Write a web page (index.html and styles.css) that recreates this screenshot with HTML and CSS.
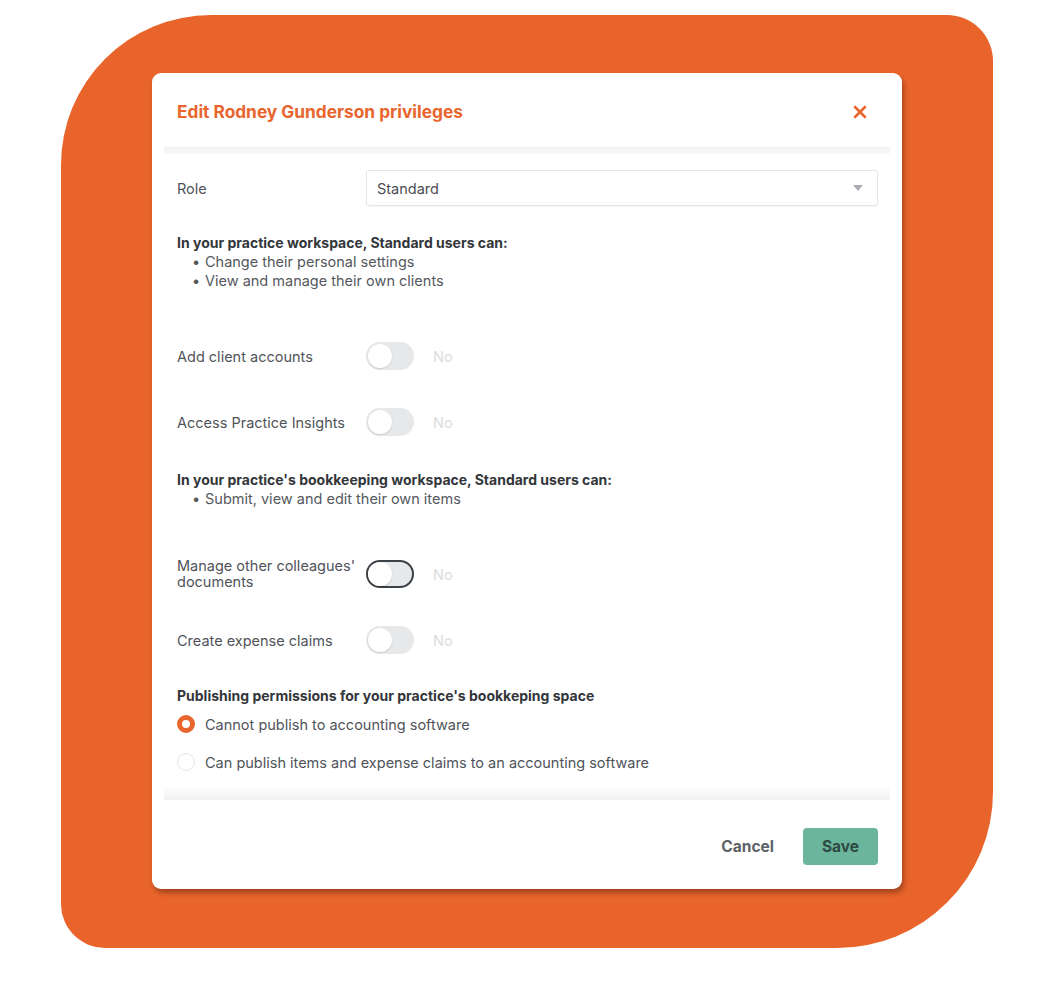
FILE: index.html
```html
<!DOCTYPE html>
<html lang="en">
<head>
    <meta charset="UTF-8">
    <meta name="viewport" content="width=device-width, initial-scale=1.0">
    <title>Edit privileges</title>
    <link rel="stylesheet" href="styles.css">
</head>
<body>
    <div class="stage">
        <div class="blob">
            <div class="modal">
                <header class="modal-head">
                    <h1>Edit Rodney Gunderson privileges</h1>
                    <svg class="close" width="14" height="14" viewBox="0 0 14 14">
                        <path d="M2 2 L12 12 M12 2 L2 12" stroke="#e8652d" stroke-width="2.6" stroke-linecap="round"/>
                    </svg>
                </header>
                <div class="band band-top"></div>

                <div class="modal-body">
                    <div class="row role-row">
                        <span class="label">Role</span>
                        <div class="select">
                            <span>Standard</span>
                            <svg width="10" height="6" viewBox="0 0 10 6"><path d="M0 0 H10 L5 6 Z" fill="#a9adb3"/></svg>
                        </div>
                    </div>

                    <div class="info first">
                        <p class="info-title">In your practice workspace, Standard users can:</p>
                        <ul>
                            <li>Change their personal settings</li>
                            <li>View and manage their own clients</li>
                        </ul>
                    </div>

                    <div class="row toggle-row gap-l">
                        <span class="label">Add client accounts</span>
                        <span class="toggle"><span class="knob"></span></span>
                        <span class="state">No</span>
                    </div>
                    <div class="row toggle-row gap-m">
                        <span class="label">Access Practice Insights</span>
                        <span class="toggle"><span class="knob"></span></span>
                        <span class="state">No</span>
                    </div>

                    <div class="info">
                        <p class="info-title">In your practice's bookkeeping workspace, Standard users can:</p>
                        <ul>
                            <li>Submit, view and edit their own items</li>
                        </ul>
                    </div>

                    <div class="row toggle-row gap-l">
                        <span class="label two-line">Manage other colleagues' documents</span>
                        <span class="toggle focused"><span class="knob"></span></span>
                        <span class="state">No</span>
                    </div>
                    <div class="row toggle-row gap-m">
                        <span class="label">Create expense claims</span>
                        <span class="toggle"><span class="knob"></span></span>
                        <span class="state">No</span>
                    </div>

                    <div class="publish">
                        <p class="info-title">Publishing permissions for your practice's bookkeping space</p>
                        <label class="radio"><span class="dot checked"></span>Cannot publish to accounting software</label>
                        <label class="radio"><span class="dot"></span>Can publish items and expense claims to an accounting software</label>
                    </div>
                </div>

                <div class="band band-bottom"></div>
                <footer class="modal-foot">
                    <button class="btn-cancel">Cancel</button>
                    <button class="btn-save">Save</button>
                </footer>
            </div>
        </div>
    </div>
</body>
</html>
```

FILE: styles.css
```css
* {
    margin: 0;
    padding: 0;
    box-sizing: border-box;
}

body {
    background: #fff;
    font-family: Inter, 'Liberation Sans', sans-serif;
    color: #4a4d52;
}

.stage {
    width: 1048px;
    height: 988px;
    padding: 15px 0 0 61px;
}

.blob {
    width: 932px;
    height: 933px;
    background: #e9642b;
    border-radius: 150px 46px 156px 44px;
    padding: 58px 0 0 91px;
}

.modal {
    width: 750px;
    height: 816px;
    background: #fff;
    border-radius: 9px;
    box-shadow: 2px 4px 5px rgba(80, 30, 10, 0.45);
    display: flex;
    flex-direction: column;
    overflow: hidden;
}

.modal-head {
    height: 74px;
    padding: 0 35px 0 25px;
    display: flex;
    align-items: center;
    justify-content: space-between;
}

.modal-head h1 {
    font-size: 17.3px;
    font-weight: 700;
    color: #e8652d;
    padding-top: 3px;
}

.close {
    margin-top: 4px;
}

.band {
    height: 7px;
    margin: 0 12px;
}

.band-top {
    background: linear-gradient(#f2f3f4, #f8f8f9);
}

.band-bottom {
    height: 14px;
    background: linear-gradient(rgba(242, 243, 245, 0), #eff0f2);
}

.modal-body {
    flex: 1;
    padding: 16px 24px 0 25px;
    font-size: 14.5px;
}

.row {
    display: flex;
    align-items: center;
}

.label {
    width: 189px;
    flex-shrink: 0;
    color: #50545a;
    font-size: 14.5px;
}

.label.two-line {
    line-height: 16px;
    padding-right: 6px;
}

.select {
    flex: 1;
    height: 36px;
    border: 1px solid #e3e5e9;
    border-radius: 3px;
    display: flex;
    align-items: center;
    justify-content: space-between;
    padding: 0 14px 0 10px;
    color: #4a4d52;
    box-shadow: 0 1px 1px rgba(0, 0, 0, 0.05);
}

.info {
    margin-top: 34px;
    line-height: 19px;
}

.info.first {
    margin-top: 27px;
}

.info-title {
    font-weight: 700;
    font-size: 14px;
    color: #33363a;
}

.info ul {
    list-style: none;
    padding-left: 15px;
    color: #55595e;
}

.info li::before {
    content: "\2022";
    display: inline-block;
    width: 13px;
}

.toggle-row {
    height: 28px;
}

.gap-l {
    margin-top: 52px;
}

.gap-m {
    margin-top: 38px;
}

.toggle {
    width: 48px;
    height: 28px;
    border-radius: 14px;
    background: #e7e8ea;
    padding: 2px;
    display: flex;
    align-items: center;
}

.toggle.focused {
    border: 2px solid #3c4146;
    padding: 0 2px 0 0;
}

.knob {
    width: 24px;
    height: 24px;
    border-radius: 50%;
    background: #fff;
    box-shadow: 0 1px 2px rgba(0, 0, 0, 0.12);
}

.state {
    margin-left: 19px;
    color: #dcdcdc;
    font-size: 14.5px;
}

.publish {
    margin-top: 32px;
    line-height: 19px;
}

.radio {
    height: 38px;
    display: flex;
    align-items: center;
    color: #50545a;
    font-size: 14.5px;
}

.dot {
    width: 18px;
    height: 18px;
    border-radius: 50%;
    border: 1px solid #e3e5e8;
    margin-right: 10px;
}

.dot.checked {
    border: 5px solid #e8652d;
    background: #fff;
}

.modal-foot {
    height: 89px;
    padding: 4px 24px 0 0;
    display: flex;
    align-items: center;
    justify-content: flex-end;
    gap: 29px;
}

.btn-cancel {
    border: none;
    background: none;
    font-family: inherit;
    font-weight: 700;
    font-size: 15.5px;
    color: #5d6267;
}

.btn-save {
    width: 75px;
    height: 37px;
    border: none;
    border-radius: 4px;
    background: #6ab59b;
    color: #2f4a43;
    font-family: inherit;
    font-weight: 700;
    font-size: 15.5px;
}
```
